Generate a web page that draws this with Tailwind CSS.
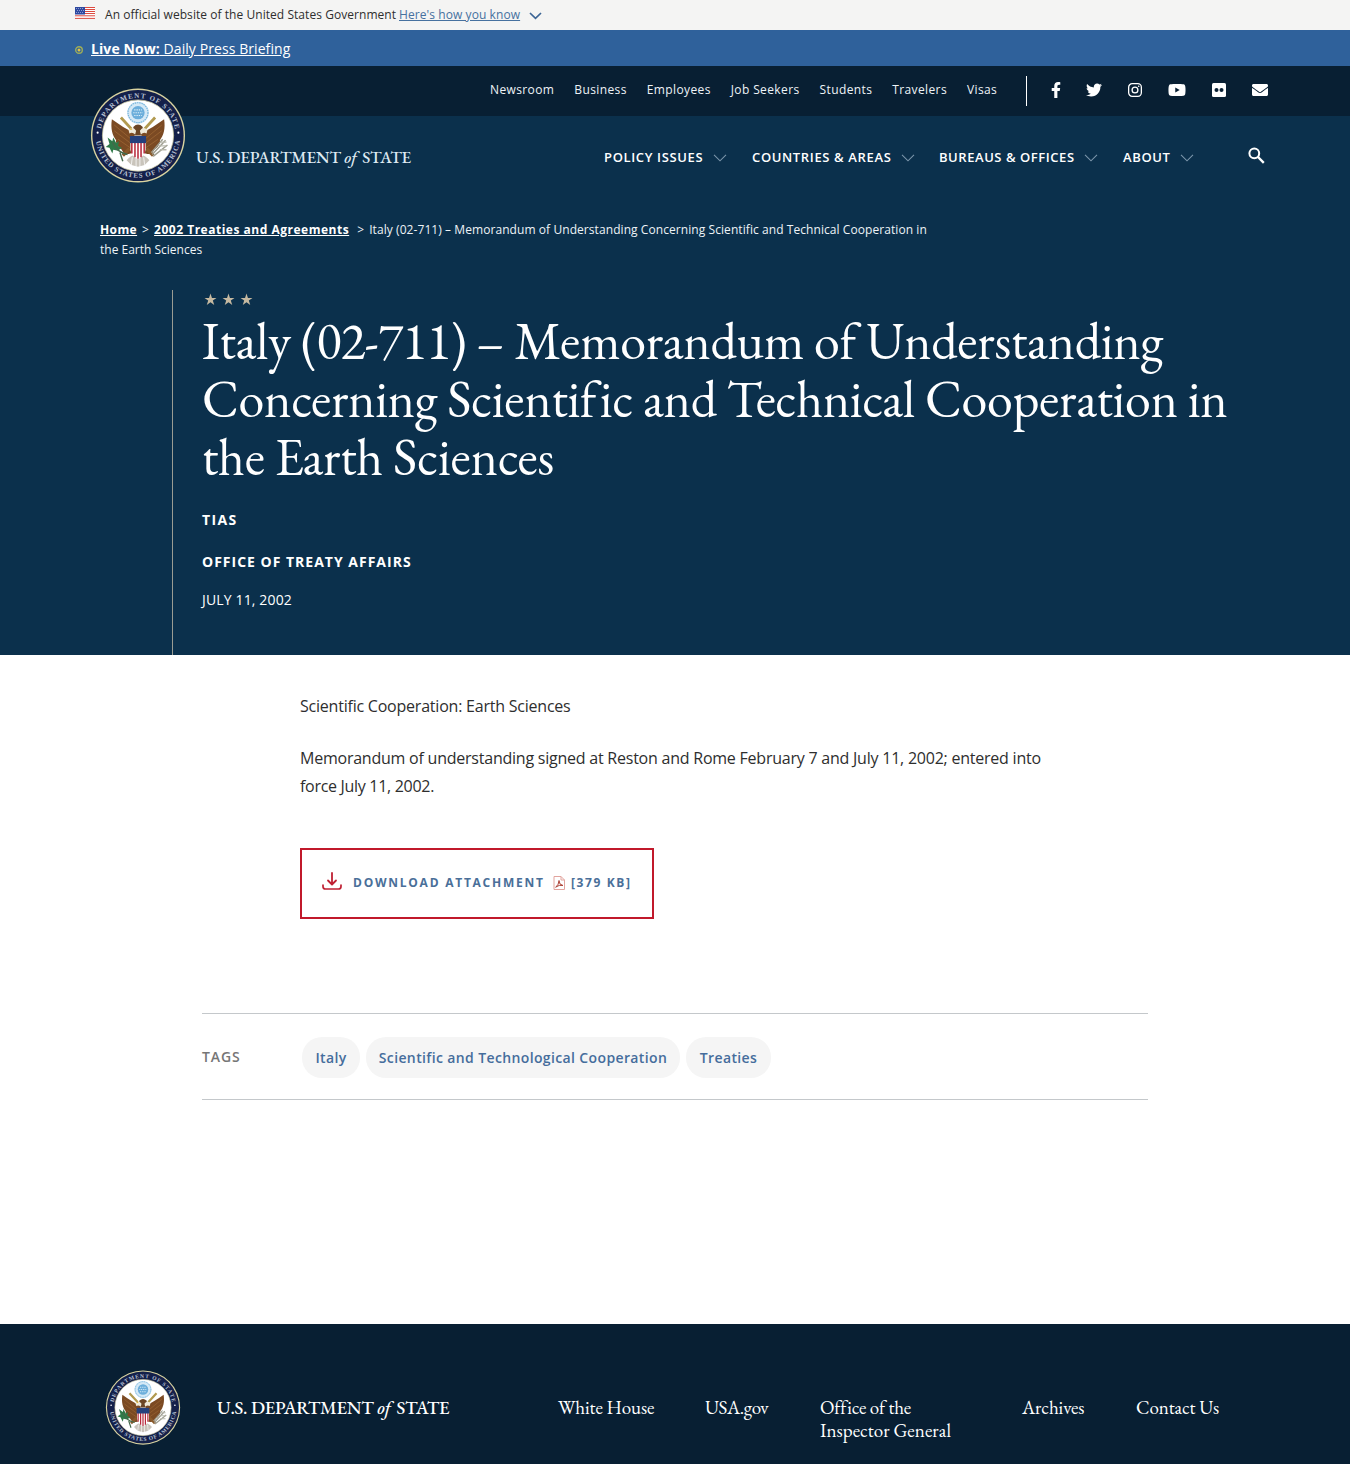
<!DOCTYPE html>
<html lang="en">
<head>
<meta charset="utf-8">
<title>Italy (02-711) - United States Department of State</title>
<script src="https://cdn.jsdelivr.net/npm/@tailwindcss/browser@4"></script>
</head>
<body class="w-[1350px] h-[1464px] overflow-hidden bg-white font-['Open_Sans',sans-serif] text-[#2e2e2e]">

<svg class="hidden">
  <symbol id="seal" viewBox="0 0 100 100">
    <circle cx="50" cy="50" r="49.500" fill="#d9d3a0"/>
    <circle cx="50" cy="50" r="48" fill="#14204a"/>
    <circle cx="50" cy="50" r="37.500" fill="#fff" stroke="#c9c6a0" stroke-width=".8"/>
    <path id="arcTop" d="M10.500 50A39.500 39.500 0 0 1 89.500 50" fill="none"/>
    <path id="arcBottom" d="M5.500 50A44.500 44.500 0 0 0 94.500 50" fill="none"/>
    <g fill="#b9c2d4" font-family="Liberation Serif, serif" font-size="7.400" font-weight="bold">
      <text><textPath href="#arcTop" startOffset="7" textLength="110">DEPARTMENT OF STATE</textPath></text>
      <text><textPath href="#arcBottom" startOffset="6" textLength="128">UNITED STATES OF AMERICA</textPath></text>
    </g>
    <circle cx="7.500" cy="54" r="1.100" fill="#fff" transform="translate(0 -7)"/><circle cx="92.500" cy="47" r="1.100" fill="#fff"/>
    <circle cx="50" cy="26" r="11.500" fill="#d5e9f6"/>
    <circle cx="50" cy="26" r="10.500" fill="none" stroke="#76b4dc" stroke-width="1.200" stroke-dasharray="1.600 .8"/>
    <circle cx="50" cy="26" r="7" fill="#6caedb"/>
    <path d="M46 23h8M45 26h10M46 29h8" stroke="#d9edf8" stroke-width="1.200" stroke-dasharray="1.400 1"/>
    <path d="M32 31L43 43M68 31L57 43" stroke="#b29a50" stroke-width="3"/>
    <path d="M46 47C38 44 31 39 22.500 33C21 43 23 50 27 55C26 57 29 63 33 65C34 69 41 71 44 68L47 58Z" fill="#7b4a23"/>
    <path d="M54 47C62 44 69 39 77.500 33C79 43 77 50 73 55C74 57 71 63 67 65C66 69 59 71 56 68L53 58Z" fill="#7b4a23"/>
    <path d="M25 39L43 54M25 45L42 58M29 54L42 63M75 39L57 54M75 45L58 58M71 54L58 63" stroke="#9a6432" stroke-width=".9"/>
    <path d="M45 41Q50 36 55 41L54 50H46Z" fill="#6b4525"/>
    <path d="M40 44Q45 40 48 45L47 49Q44 46 41 48ZM60 44Q55 40 52 45L53 49Q56 46 59 48Z" fill="#efe9d8"/>
    <path d="M43 42l-2 2 3 0z" fill="#e0b23a"/>
    <path d="M41 64L34 71M59 64L66 71" stroke="#8a5a2b" stroke-width="3.500"/>
    <path d="M38 76Q44 69 50 71Q56 69 62 76L57 81L50 83L43 81Z" fill="#c9c4bb"/>
    <path d="M44 73L43 81M48 72V83M52 72V83M56 73L57 81" stroke="#fff" stroke-width=".8"/>
    <path d="M42 51H58V65Q57 72 50 75Q43 72 42 65Z" fill="#fff"/>
    <path d="M43.500 56V69M46.800 56V73M50 56V74.500M53.200 56V73M56.500 56V69" stroke="#b7283a" stroke-width="1.600"/>
    <path d="M41.500 50.500H58.500V58H41.500Z" fill="#25407c"/>
    <path d="M18 52l5 4 1-4 3 6 3-2-1 5 4 2-4 3-5-1-1 4-3-6-4-1 4-3z" fill="#2f7a48"/>
    <path d="M23 57Q28 68 39 70M31 68L34 77" stroke="#44694a" stroke-width="1.500" fill="none"/>
    <path d="M65 70L79 55M66 72L81 60M64 68L76 54" stroke="#9c9c8e" stroke-width="1.500"/>
    <path d="M73 57h7M72 61h8M73 65h7" stroke="#b9b9ae" stroke-width="1.400"/>
  </symbol>
  <symbol id="chevron" viewBox="0 0 14 8"><path d="M1 .8L7 6.800L13 .8" fill="none" stroke="currentColor" stroke-width="1.100"/></symbol>
  <symbol id="star" viewBox="0 0 24 24"><path d="M12 1l2.700 8H23l-6.700 5 2.600 8.300L12 17.200l-6.900 5.100L7.700 14 1 9h8.300z" fill="currentColor"/></symbol>
</svg>

<!-- Government banner -->
<div class="h-[30px] bg-[#f4f4f3] pl-[75px] flex items-center text-[12px] leading-[30px]">
  <svg class="w-5 h-3 mb-1 mr-[10px]" viewBox="0 0 20 12">
    <path fill="#fff" d="M0 0h20v12H0z"/>
    <path stroke="#dc4b40" d="M0 .5h20M0 2.500h20M0 4.500h20M0 6.500h20M0 8.800h20M0 11.400h20"/>
    <path fill="#2f49a0" d="M0 0h10v7.500H0z"/>
    <path stroke="#8c9ad0" stroke-dasharray="1 1" d="M1 1.500h8M2 3.500h7M1 5.500h8"/>
  </svg>
  <span class="w-[294px] whitespace-nowrap tracking-[0.050px]">An official website of the United States Government</span>
  <a class="underline text-[#46719f] whitespace-nowrap tracking-[0.080px]">Here's how you know</a>
  <svg class="w-[13px] h-2 ml-[9px] mt-[2px]" viewBox="0 0 13 8"><path d="M1 1l5.500 5.300L12 1" fill="none" stroke="#3c6595" stroke-width="1.700"/></svg>
</div>

<!-- Live notice -->
<div class="h-9 bg-[#2f619b] pl-[75px] flex items-center text-white text-[14px]">
  <svg class="w-2 h-2 mt-[3px] mr-2" viewBox="0 0 8 8"><circle cx="4" cy="4" r="3.300" fill="none" stroke="#9fae58" stroke-width="1.400"/><circle cx="4" cy="4" r="1.500" fill="#e0c348"/></svg>
  <a class="underline whitespace-nowrap tracking-[0.080px]"><b>Live Now:</b> Daily Press Briefing</a>
</div>

<header class="relative h-[589px] bg-[#0b304c] text-white">
  <div class="h-[50px] bg-[#081f33] pl-[490px] flex items-start">
    <nav class="flex gap-5 w-[536px] pt-[14px] text-[12px] leading-[20px] tracking-[0.380px] whitespace-nowrap text-[#eef3f7]">
      <a>Newsroom</a><a>Business</a><a>Employees</a><a>Job Seekers</a><a>Students</a><a>Travelers</a><a>Visas</a>
    </nav>
    <div class="w-px h-[30px] mt-[10px] bg-white"></div>
    <div class="flex items-center h-4 mt-4">
      <svg class="w-[10px] h-4 ml-6" viewBox="0 0 320 512"><path fill="#fff" d="M279.140 288l14.220-92.660h-88.910v-60.130c0-25.350 12.420-50.060 52.240-50.060h40.420V6.260S260.430 0 225.360 0c-73.220 0-121.080 44.380-121.080 124.720v70.620H22.890V288h81.390v224h100.170V288z"/></svg>
      <svg class="w-4 h-4 ml-[25px]" viewBox="0 0 512 512"><path fill="#fff" d="M459.370 151.716c.325 4.548.325 9.097.325 13.645 0 138.720-105.583 298.558-298.558 298.558-59.452 0-114.680-17.219-161.137-47.106 8.447.974 16.568 1.299 25.340 1.299 49.055 0 94.213-16.568 130.274-44.832-46.132-.975-84.792-31.188-98.112-72.772 6.498.974 12.995 1.624 19.818 1.624 9.421 0 18.843-1.300 27.614-3.573-48.081-9.747-84.143-51.980-84.143-102.985v-1.299c13.969 7.797 30.214 12.670 47.431 13.319-28.264-18.843-46.781-51.005-46.781-87.391 0-19.492 5.197-37.360 14.294-52.954 51.655 63.675 129.300 105.258 216.365 109.807-1.624-7.797-2.599-15.918-2.599-24.040 0-57.828 46.782-104.934 104.934-104.934 30.213 0 57.502 12.670 76.670 33.137 23.715-4.548 46.456-13.320 66.599-25.340-7.798 24.366-24.366 44.833-46.132 57.827 21.117-2.273 41.584-8.122 60.426-16.243-14.292 20.791-32.161 39.308-52.628 54.253z"/></svg>
      <svg class="w-[14px] h-[14px] ml-[26px]" viewBox="0 0 14 14" fill="none" stroke="#fff" stroke-width="1.300"><rect x=".65" y=".65" width="12.700" height="12.700" rx="3.500"/><circle cx="7" cy="7" r="2.900"/><circle cx="10.700" cy="3.300" r=".8" fill="#fff" stroke="none"/></svg>
      <svg class="w-[18px] h-4 ml-[26px]" viewBox="0 0 576 512"><path fill="#fff" d="M549.655 124.083c-6.281-23.650-24.787-42.276-48.284-48.597C458.781 64 288 64 288 64S117.220 64 74.629 75.486c-23.497 6.322-42.003 24.947-48.284 48.597-11.412 42.867-11.412 132.305-11.412 132.305s0 89.438 11.412 132.305c6.281 23.650 24.787 41.500 48.284 47.821C117.220 448 288 448 288 448s170.780 0 213.371-11.486c23.497-6.321 42.003-24.171 48.284-47.821 11.412-42.867 11.412-132.305 11.412-132.305s0-89.438-11.412-132.305zm-317.510 213.508V175.185l142.739 81.205-142.739 81.201z"/></svg>
      <svg class="w-[14px] h-[14px] ml-[26px]" viewBox="0 0 14 14"><rect width="14" height="14" rx="1.500" fill="#fff"/><circle cx="4.500" cy="7" r="2" fill="#081f33"/><circle cx="9.500" cy="7" r="2" fill="#081f33"/></svg>
      <svg class="w-4 h-4 ml-[26px]" viewBox="0 0 512 512"><path fill="#fff" d="M502.300 190.800c3.900-3.100 9.700-.2 9.700 4.700V400c0 26.500-21.500 48-48 48H48c-26.500 0-48-21.500-48-48V195.600c0-5 5.700-7.800 9.700-4.700 22.400 17.400 52.100 39.500 154.100 113.600 21.100 15.400 56.700 47.800 92.200 47.600 35.700.3 72-32.800 92.300-47.600 102-74.100 131.600-96.300 154-113.700zM256 320c23.200.4 56.600-29.200 73.400-41.400 132.700-96.300 142.800-104.700 173.400-128.700 5.800-4.500 9.200-11.500 9.200-18.900v-19c0-26.500-21.500-48-48-48H48c-26.500 0-48 21.500-48 48v19c0 7.400 3.400 14.300 9.200 18.900 30.600 23.900 40.700 32.400 173.400 128.700 16.800 12.200 50.200 41.800 73.400 41.400z"/></svg>
    </div>
  </div>

  <div class="absolute left-[90px] top-[22px] flex">
    <svg class="w-[96px] h-[95px]"><use href="#seal"/></svg>
    <span class="ml-[10px] mt-[57px] font-['EB_Garamond','Liberation_Serif',serif] font-medium text-[17px] leading-6 tracking-[-0.170px] whitespace-nowrap text-[#dfeaf3]">U.S. DEPARTMENT <i class="mr-[2px]">of</i> STATE</span>
  </div>

  <nav class="h-[83px] pl-[604px] flex items-center text-[13px] font-semibold tracking-[0.640px] whitespace-nowrap">
    <a class="w-[109px] mt-px">POLICY ISSUES</a><svg class="w-[14px] h-2 mr-[25px] mt-px text-[#7c96ab]"><use href="#chevron"/></svg>
    <a class="w-[149px] mt-px">COUNTRIES &amp; AREAS</a><svg class="w-[14px] h-2 mr-[24px] mt-px text-[#7c96ab]"><use href="#chevron"/></svg>
    <a class="w-[145px] mt-px tracking-[0.550px]">BUREAUS &amp; OFFICES</a><svg class="w-[14px] h-2 mr-[25px] mt-px text-[#7c96ab]"><use href="#chevron"/></svg>
    <a class="w-[57px] mt-px">ABOUT</a><svg class="w-[14px] h-2 mt-px text-[#7c96ab]"><use href="#chevron"/></svg>
    <svg class="w-[17px] h-[17px] ml-[54px] mb-[5px]" viewBox="0 0 17 17" fill="none" stroke="#fff"><circle cx="6.300" cy="6.300" r="4.900" stroke-width="2"/><path d="M10 10l5.800 5.800" stroke-width="2.400"/></svg>
  </nav>

  <div class="pl-[100px] mt-[21px] text-[12px] leading-[20px] whitespace-nowrap text-[#eef3f7]">
    <div class="flex"><a class="font-bold underline text-white tracking-[0.400px]">Home</a><span class="ml-[5px] w-3">&gt;</span><a class="font-bold underline tracking-[0.510px] text-white">2002 Treaties and Agreements</a><span class="ml-2 w-3">&gt;</span><span class="tracking-[0.070px]">Italy (02-711) – Memorandum of Understanding Concerning Scientific and Technical Cooperation in</span></div>
    <div>the Earth Sciences</div>
  </div>

  <div class="ml-[172px] mt-[30px] h-[365px] border-l border-[#9a9c93] pl-[29px]">
    <div class="flex gap-[5px] pl-[2px] pt-[3px] text-[#c6b9a1]">
      <svg class="w-[13px] h-[13px]"><use href="#star"/></svg><svg class="w-[13px] h-[13px]"><use href="#star"/></svg><svg class="w-[13px] h-[13px]"><use href="#star"/></svg>
    </div>
    <h1 class="mt-[6px] font-['EB_Garamond','Liberation_Serif',serif] text-[52px] leading-[58px] whitespace-nowrap tracking-[-0.310px]">
      <span class="block tracking-[-0.260px]">Italy <span class="tracking-[-0.850px]">(02-711)</span> – Memorandum of Understanding</span>
      <span class="block">Concerning Scientific and Technical Cooperation in</span>
      <span class="block tracking-[-0.240px]">the Earth Sciences</span>
    </h1>
    <div class="mt-[24px] text-[14px] leading-[20px] font-bold tracking-[1.400px]">TIAS</div>
    <div class="mt-[22px] text-[14px] leading-[20px] font-bold tracking-[1px]">OFFICE OF TREATY AFFAIRS</div>
    <div class="mt-[18px] text-[14px] leading-[20px] tracking-[0.150px]">JULY 11, 2002</div>
  </div>
</header>

<main class="h-[669px] pt-[37px]">
  <div class="ml-[300px] text-[16px] leading-7 whitespace-nowrap">
    <p class="tracking-[-0.220px]">Scientific Cooperation: Earth Sciences</p>
    <p class="mt-6 tracking-[-0.230px]">Memorandum of understanding signed at Reston and Rome February 7 and July 11, 2002; entered into<br><span class="tracking-[-0.300px]">force July 11, 2002.</span></p>
  </div>
  <a class="ml-[300px] mt-12 w-[354px] h-[71px] border-2 border-[#c1192b] flex items-start pl-5 pt-[21px] text-[12px] leading-[24px] font-bold tracking-[1.500px] text-[#4a6f99] whitespace-nowrap">
    <svg class="w-5 h-[19px] mr-[11px] mt-px" viewBox="0 0 20 19" fill="none" stroke="#bf2033" stroke-width="1.800" stroke-linecap="round" stroke-linejoin="round"><path d="M10 1v11M6 8.500l4 4 4-4"/><path d="M1 13v1.500Q1 17 3.500 17h13Q19 17 19 14.500V13" stroke-width="1.700"/></svg>
    <span class="w-[200px] tracking-[1.750px]">DOWNLOAD ATTACHMENT</span>
    <svg class="w-3 h-[14px] mr-[6px] mt-[5px]" viewBox="0 0 12 14" fill="none" stroke="#e2a49e"><path d="M1 .5h7l3.500 3.500v9.500H1zM8 .5v3.500h3.500"/><path d="M2.500 11.500Q6 8.500 6 4.500Q6 9 10 9.500Q6 8.500 3 11" stroke="#ae4438"/></svg>
    <span class="tracking-[1.600px]">[379 KB]</span>
  </a>
  <div class="ml-[202px] mt-[94px] w-[946px] h-[87px] border-y border-[#c4c8cb] flex items-center text-[14px] font-semibold whitespace-nowrap">
    <span class="w-[100px] text-[#767676] tracking-[0.900px]">TAGS</span>
    <div class="flex gap-[6px] mt-[2px] text-[#456d9c] tracking-[0.370px]">
      <span class="w-[58px] h-[41px] rounded-[20px] bg-[#f5f5f5] flex items-center justify-center">Italy</span>
      <span class="w-[314px] h-[41px] rounded-[20px] bg-[#f5f5f5] flex items-center justify-center">Scientific and Technological Cooperation</span>
      <span class="w-[85px] h-[41px] rounded-[20px] bg-[#f5f5f5] flex items-center justify-center">Treaties</span>
    </div>
  </div>
</main>

<footer class="h-[140px] bg-[#081f33] text-white pl-[105px] pt-[46px] flex items-start font-['EB_Garamond','Liberation_Serif',serif] whitespace-nowrap">
  <svg class="w-[76px] h-[75px]"><use href="#seal"/></svg>
  <span class="ml-9 mt-[26px] w-[341px] text-[18.500px] leading-6 tracking-[-0.250px] font-medium">U.S. DEPARTMENT <i class="mr-[2px]">of</i> STATE</span>
  <nav class="flex mt-[26px] text-[19px] leading-[23px] tracking-[-0.100px]">
    <a class="w-[147px]">White House</a>
    <a class="w-[115px] tracking-[-0.400px]">USA.gov</a>
    <a class="w-[202px]"><span class="tracking-[-0.200px]">Office of the</span><br><span class="tracking-[0.050px]">Inspector General</span></a>
    <a class="w-[114px]">Archives</a>
    <a>Contact Us</a>
  </nav>
</footer>
</body>
</html>
